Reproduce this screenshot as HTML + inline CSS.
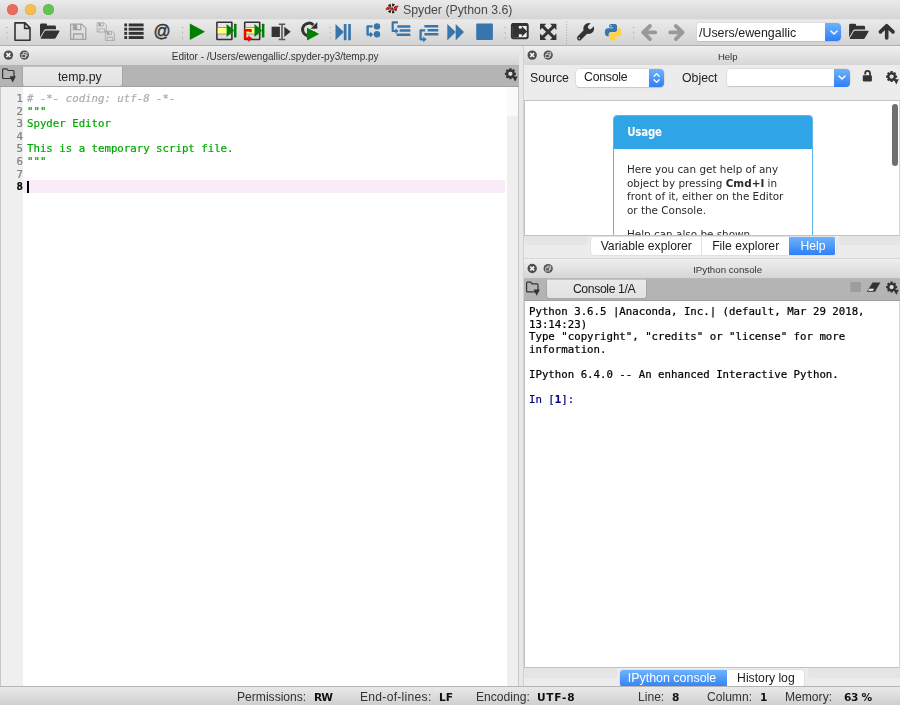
<!DOCTYPE html>
<html lang="en">
<head>
<meta charset="utf-8">
<title>Spyder (Python 3.6)</title>
<style>
*{box-sizing:border-box;margin:0;padding:0}
html,body{width:900px;height:705px;overflow:hidden;background:#ececec}
body{position:relative;font-family:"Liberation Sans",sans-serif;font-size:12.3px;color:#262626}
.abs{position:absolute}
.mono,.lbl,.tab,.btab,.sb,.docktitle,#title,#helpview{will-change:transform}
svg{position:absolute;overflow:visible}
#titlebar{left:0;top:0;width:900px;height:19.4px;background:linear-gradient(#eaeaea,#d5d5d5)}
#title{left:402.800px;top:0;height:19px;line-height:21.600px;font-size:12.3px;color:#484848;white-space:pre}
.tl{width:10.8px;height:10.8px;border-radius:50%;top:3.9px;box-shadow:inset 0 0 0 .6px rgba(0,0,0,.13)}
#toolbar{left:0;top:19.4px;width:900px;height:26.3px;background:linear-gradient(#eaeaea,#d3d3d3);border-top:1px solid #e4e4e4;border-bottom:1px solid #afafaf}
.docktitle{height:19.6px;background:linear-gradient(#efefef,#d6d6d6);border-bottom:1px solid #b9b9b9;font-size:10px;line-height:21.200px;text-align:center;color:#333;white-space:pre}
.tabbar{height:22px;background:#b4b4b4;border-bottom:1px solid #a0a0a0}
.tab{background:linear-gradient(#e9e9e9,#e2e2e2);border:1px solid #a6a6a6;border-top-color:#c2c2c2;border-radius:1px 1px 3px 3px;font-size:12.3px;line-height:19px;text-align:center;color:#222;white-space:pre}
.mono{font-family:"DejaVu Sans Mono","Liberation Mono",monospace;font-size:10.72px;line-height:12.59px;white-space:pre;-webkit-text-stroke:.22px currentColor}
.btabs{height:18.4px;border-radius:3.5px;background:#fff;box-shadow:0 0 0 .5px #d2d2d2,0 .5px 1px rgba(0,0,0,.18)}
.btab{height:18.4px;top:0;font-size:12.2px;line-height:18.2px;text-align:center;color:#1c1c1c;white-space:pre}
.btab.sel{background:linear-gradient(#6db3fb,#2f7ef6);color:#fff}
.sb{top:687.5px;height:18px;line-height:18px;font-size:12.1px;color:#333;white-space:pre}
.sb b{font-family:"DejaVu Sans","Liberation Sans",sans-serif;font-size:10.6px;color:#111}
.lbl{font-size:12.3px;line-height:14px;white-space:pre;color:#222}
.combo{background:#fff;border-radius:4px;box-shadow:0 0 0 .5px #d4d4d4,0 .6px .8px rgba(0,0,0,.2)}
.cbtn{background:linear-gradient(#6db3fb,#2f7ef6);border-radius:0 4px 4px 0}
</style>
</head>
<body>
<!-- title bar -->
<div id="titlebar" class="abs"></div>
<div id="title" class="abs">Spyder (Python 3.6)</div>
<svg style="left:386.100px;top:3.300px" width="12" height="11" viewBox="-6 -5.500 12 11"><circle r="5.200" fill="#f4f4f4"/><circle r="3.600" fill="none" stroke="#2a2a2a" stroke-width="2.900" stroke-dasharray="2.300 1"/><circle r="1.200" fill="#2a2a2a"/><path d="M-5.400.6q1.700-3 3.500-1t3.100 1.600q2.200-.4 4.300-3.400" fill="none" stroke="#e2281e" stroke-width="2" stroke-linecap="round"/></svg>
<div class="abs tl" style="left:7.300px;background:#ee6a5e"></div>
<div class="abs tl" style="left:25.300px;background:#f5bf4f"></div>
<div class="abs tl" style="left:43.300px;background:#61c554"></div>
<!-- toolbar -->
<div id="toolbar" class="abs"></div>
<svg id="tbicons" style="left:0;top:19px" width="900" height="27" viewBox="0 19 900 27">
<g fill="#9a9a9a">
<!-- toolbar handles -->
<g id="hd"><rect x="6.6" y="26.9" width="1" height="1"/><rect x="6.6" y="32.3" width="1" height="1"/><rect x="6.6" y="37.6" width="1" height="1"/></g>
<use href="#hd" x="175.4"/><use href="#hd" x="323"/><use href="#hd" x="498"/><use href="#hd" x="626.5"/>
</g>
<!-- vertical dotted separator -->
<line x1="566.6" y1="21.5" x2="566.6" y2="44" stroke="#a6a6a6" stroke-width="1" stroke-dasharray="1 1.7"/>
<!-- new file -->
<path d="M15 22.9h10l5 5v12.4h-15z M24.6 23.2v5.2h5.2" fill="none" stroke="#333" stroke-width="1.6" stroke-linejoin="round"/>
<!-- open folder -->
<g id="fopen" fill="#333"><path d="M40 37.2v-12.2q0-1.4 1.4-1.4h4.2q1.4 0 1.4 1.4v.6h7.6q1.4 0 1.4 1.4v2.2h-10q-1.3 0-2 1.2z"/><path d="M41.2 38.8q-1 0-.4-1l3.6-6.3q.6-1 1.8-1h12.6q1.2 0 .6 1l-3.6 6.3q-.6 1-1.8 1z"/></g>
<!-- save (disabled) -->
<g id="fsave"><path d="M70.6 24.1h11.2l4 4v11.3h-15.200z" fill="none" stroke="#a3a3a3" stroke-width="1.3" stroke-linejoin="round"/><path d="M73.4 24.1v5.6h7.4v-5.6M73.600 39.4v-5.4h9.2v5.4" fill="none" stroke="#a3a3a3" stroke-width="1.300"/><rect x="73.6" y="24.4" width="3.600" height="5" fill="#a3a3a3"/></g>
<!-- save all (disabled) -->
<g transform="translate(54.4 8.200) scale(.605)"><use href="#fsave"/></g>
<g transform="translate(62.6 16.700) scale(.605)"><use href="#fsave"/></g>
<!-- list -->
<g fill="#333"><rect x="124.3" y="23.5" width="2.800" height="2.900"/><rect x="128.7" y="23.5" width="14.900" height="2.900"/>
<rect x="124.3" y="27.700" width="2.800" height="2.900"/><rect x="128.7" y="27.700" width="14.900" height="2.900"/>
<rect x="124.3" y="31.900" width="2.800" height="2.900"/><rect x="128.7" y="31.900" width="14.900" height="2.900"/>
<rect x="124.3" y="36.100" width="2.800" height="2.900"/><rect x="128.7" y="36.100" width="14.900" height="2.900"/></g>
<!-- at -->
<text x="153.400" y="37.200" textLength="17.100" lengthAdjust="spacingAndGlyphs" font-family="Liberation Sans, sans-serif" font-size="17.900" fill="#333" stroke="#333" stroke-width=".45">@</text>
<!-- run -->
<path d="M189.800 23.400l15.300 8.300l-15.300 8.300z" fill="#008000"/>
<!-- run cell -->
<g id="cell"><rect x="216.900" y="22.200" width="15" height="17.300" rx=".4" fill="none" stroke="#333" stroke-width="1.600"/><rect x="217.700" y="27.700" width="13.400" height="6.200" fill="#ffff88"/><path d="M217.700 27.500h13.400M217.700 34.100h13.400" stroke="#8a7a50" stroke-width=".7"/></g>
<g id="garr" fill="#008000"><path d="M226.600 23.900l7.600 6.600l-7.600 6.600z"/><rect x="234" y="23.700" width="2.500" height="13.800" rx=".6"/></g>
<!-- run cell advance -->
<use href="#cell" x="27.800"/><use href="#garr" x="27.900"/>
<path d="M250.500 32.300v-2h-5.400v8.100h4" fill="none" stroke="#ff0000" stroke-width="2.400"/><path d="M248.300 35.200l4 3.400l-4 3.600z" fill="#ff0000"/>
<!-- run selection -->
<rect x="271.600" y="26.700" width="8.300" height="10.300" fill="#333"/><path d="M278.800 24.300h6.400M278.800 39.500h6.400M282 24.300v15.200" stroke="#585858" stroke-width="1.600" fill="none"/><path d="M284.300 26.700l6.400 5.100l-6.400 5.200z" fill="#333"/>
<!-- rerun -->
<path d="M313.400 25A6.350 6.350 0 1 0 314.800 31.800" fill="none" stroke="#333" stroke-width="3"/><path d="M317.300 21.900v6.800h-6.800z" fill="#333"/>
<path d="M307 27.800l12.200 6.300l-12.200 6.500z" fill="#008000"/>
<!-- debug -->
<g fill="#3776ab"><path d="M335.500 23.900l8.300 8.100l-8.300 8.200z"/><rect x="343.800" y="23.900" width="2.700" height="16.300" rx=".5"/><rect x="348.200" y="23.900" width="2.700" height="16.300" rx=".5"/>
<!-- step -->
<circle cx="377" cy="26.400" r="3.200"/><circle cx="377" cy="34.300" r="3.200"/><path d="M372.600 26.400h-5v8.200h3.600" fill="none" stroke="#3776ab" stroke-width="2.400" stroke-linejoin="round"/><path d="M370 31.800l3.400 2.800l-3.400 2.800z"/>
<!-- step into -->
<path d="M398 22.400h-5.300v8.600h3.200" fill="none" stroke="#3776ab" stroke-width="2.200" stroke-linejoin="round"/><path d="M395.400 28.200l3.300 2.800l-3.300 2.800z"/>
<rect x="397.300" y="25.200" width="13.100" height="2.500" rx=".5"/><rect x="399.600" y="29.300" width="10.800" height="2.500" rx=".5"/><rect x="396.600" y="33.500" width="13.800" height="2.500" rx=".5"/>
<!-- step return -->
<rect x="424.400" y="25" width="13.900" height="2.500" rx=".5"/><rect x="427.600" y="29.100" width="10.700" height="2.500" rx=".5"/><rect x="424.400" y="33.100" width="13.900" height="2.500" rx=".5"/>
<path d="M425.200 30.300h-4.600v9h3.200" fill="none" stroke="#3776ab" stroke-width="2.300" stroke-linejoin="round"/><path d="M423.200 36.400l3.500 2.900l-3.500 2.900z"/>
<!-- continue -->
<path d="M447.300 23.900l8.400 8.200l-8.400 8.400z"/><path d="M455.700 23.900l8.300 8.200l-8.300 8.400z"/>
<!-- stop -->
<rect x="476.200" y="23.500" width="16.700" height="16.400" rx="1"/></g>
<!-- maximize pane -->
<rect x="511.900" y="23.900" width="15.800" height="14.300" rx="1.600" fill="#f4f4f4" stroke="#333" stroke-width="2"/><rect x="511.900" y="23.400" width="15.800" height="2.600" fill="#333"/>
<path d="M513 25.800h5.800v2.800h3v-2.600l5.400 5.400l-5.400 5.400v-2.600h-3v3h-5.800z" fill="#333"/>
<!-- fullscreen -->
<g fill="#333" stroke="none"><path d="M540 23.700h6.400l-6.400 6.400zM556.400 23.700v6.400l-6.400-6.400zM540 39.900v-6.400l6.400 6.400zM556.400 39.900h-6.400l6.400-6.400z"/><path d="M542.200 25.900l12 11.800M554.200 25.900l-12 11.800" stroke="#333" stroke-width="3"/></g>
<!-- wrench -->
<mask id="wm" maskUnits="userSpaceOnUse" x="570" y="15" width="40" height="35"><rect x="570" y="15" width="40" height="35" fill="#fff"/><path d="M590 27.100L597 20.100" stroke="#000" stroke-width="4.300" stroke-linecap="round"/></mask>
<circle cx="588.700" cy="28.500" r="5.400" fill="#333" mask="url(#wm)"/><path d="M579.400 38l6.800-6.800" stroke="#333" stroke-width="4.900" stroke-linecap="round"/><circle cx="579.300" cy="38.200" r=".8" fill="#e4e4e4"/>
<!-- python -->
<g transform="translate(604.900 23.900) scale(.1475)"><path fill="#3776ab" d="M54.919 0C50.335.022 45.958.413 42.106 1.095 30.760 3.099 28.700 7.295 28.700 15.032V25.251H55.513V28.657H28.700 18.638C10.845 28.657 4.022 33.341 1.888 42.251-.574 52.464-.683 58.837 1.888 69.501 3.793 77.439 8.345 83.095 16.138 83.095H25.356V70.845C25.356 61.995 33.013 54.188 42.106 54.188H68.888C76.342 54.188 82.294 48.050 82.294 40.563V15.032C82.294 7.766 76.164 2.307 68.888 1.095 64.282.328 59.502-.02 54.919 0ZM40.419 8.220C43.188 8.220 45.450 10.518 45.450 13.345 45.450 16.161 43.188 18.438 40.419 18.438 37.639 18.438 35.388 16.161 35.388 13.345 35.388 10.518 37.639 8.220 40.419 8.220Z"/><path fill="#ffd43b" d="M85.638 28.657V40.563C85.638 49.794 77.812 57.563 68.888 57.563H42.106C34.770 57.563 28.700 63.842 28.700 71.188V96.720C28.700 103.986 35.019 108.260 42.106 110.345 50.594 112.840 58.733 113.291 68.888 110.345 75.638 108.390 82.294 104.457 82.294 96.720V86.501H55.513V83.095H82.294 95.700C103.492 83.095 106.396 77.659 109.106 69.501 111.906 61.102 111.786 53.026 109.106 42.251 107.181 34.493 103.502 28.657 95.700 28.657ZM70.575 93.313C73.354 93.313 75.606 95.591 75.606 98.407 75.606 101.234 73.354 103.532 70.575 103.532 67.806 103.532 65.544 101.234 65.544 98.407 65.544 95.591 67.806 93.313 70.575 93.313Z"/></g>
<!-- back / forward (disabled) -->
<g fill="none" stroke="#999" stroke-width="3.800" stroke-linecap="round" stroke-linejoin="round"><path d="M655.200 32.400h-11.500M650 26l-6.800 6.400l6.800 6.700"/><path d="M670.200 32.400h11.500M675.800 26l6.800 6.400l-6.800 6.700"/></g>
<!-- working dir open + up -->
<use href="#fopen" x="809.100" y=".2"/>
<g fill="none" stroke="#333" stroke-width="3.600" stroke-linecap="round" stroke-linejoin="round"><path d="M886.700 38v-11M880.400 31.900l6.300-6.200l6.300 6.200"/></g>
</svg>
<!-- working directory combo -->
<div class="abs combo" style="left:696.800px;top:23.200px;width:144px;height:17.400px;border-radius:1.500px 4px 4px 1.500px"></div>
<div class="abs lbl" style="left:699.200px;top:25.600px;font-size:12.4px">/Users/ewengallic</div>
<div class="abs cbtn" style="left:825px;top:23px;width:15.800px;height:17.700px"></div>
<svg style="left:829.500px;top:29.500px" width="8" height="5" viewBox="0 0 8 5"><path d="M.9.900l3.100 3l3.100-3" fill="none" stroke="#fff" stroke-width="1.400" stroke-linecap="round" stroke-linejoin="round"/></svg>

<!-- editor dock -->
<div class="abs docktitle" style="left:0;top:45.700px;width:519.400px;padding-left:31px">Editor - /Users/ewengallic/.spyder-py3/temp.py</div>
<div class="abs tabbar" style="left:0;top:65.300px;width:519.400px"></div>
<div class="abs tab" style="left:22px;top:65.600px;width:100.600px;height:20.600px;padding-left:15px;padding-top:1px">temp.py</div>
<div class="abs" style="left:0;top:87.300px;width:519.400px;height:599px;background:#fff;border-left:1px solid #c6c6c6;border-right:1px solid #c8c8c8"></div>
<div class="abs" style="left:1px;top:87.300px;width:22.200px;height:599px;background:#efefef"></div>
<div class="abs" style="left:23.200px;top:180.200px;width:482px;height:13px;background:#f7ecf8"></div>
<div class="abs" style="left:507px;top:87.300px;width:11.400px;height:599px;background:#efefef"></div>
<div class="abs" style="left:507px;top:87.300px;width:11.400px;height:28.400px;background:#fafafa"></div>
<div class="abs mono" id="lnums" style="left:0;top:92.500px;width:23px;text-align:right;color:#808080">1
2
3
4
5
6
7
<b style="color:#000">8</b></div>
<div class="abs mono" id="code" style="left:27.200px;top:92.500px;color:#00aa00"><i style="color:#adadad"># -*- coding: utf-8 -*-</i>
"""
Spyder Editor

This is a temporary script file.
"""
</div>
<div class="abs" style="left:27.300px;top:180.600px;width:1.400px;height:12.400px;background:#000"></div>

<!-- splitter -->
<div class="abs" style="left:519.400px;top:45.700px;width:4.300px;height:641px;background:#e8e8e8"></div>

<div class="abs" style="left:523.300px;top:45.700px;width:1px;height:641px;background:#d2d2d2"></div>
<!-- help dock -->
<div class="abs docktitle" style="left:523.700px;top:45.700px;width:376.300px;padding-left:31px;font-size:9.500px">Help</div>
<div class="abs" style="left:523.700px;top:65.300px;width:376.300px;height:35px;background:#ececec"></div>
<div class="abs lbl" style="left:530.400px;top:70.500px">Source</div>
<div class="abs combo" style="left:575.700px;top:68.700px;width:88px;height:18px"></div>
<div class="abs lbl" style="left:583.500px;top:70.100px;letter-spacing:-.25px">Console</div>
<div class="abs cbtn" style="left:649px;top:68.500px;width:14.800px;height:18.300px"></div>
<svg style="left:652.900px;top:71.800px" width="8" height="12" viewBox="0 0 8 12"><path d="M1 4.200l2.600-2.600l2.600 2.600M1 7.800l2.600 2.600l2.600-2.600" fill="none" stroke="#fff" stroke-width="1.300" stroke-linecap="round" stroke-linejoin="round"/></svg>
<div class="abs lbl" style="left:682.200px;top:70.500px">Object</div>
<div class="abs combo" style="left:726.700px;top:68.700px;width:123px;height:17.800px;border-radius:2px 4px 4px 2px"></div>
<div class="abs cbtn" style="left:834px;top:68.500px;width:15.700px;height:18.200px"></div>
<svg style="left:837.700px;top:75.100px" width="8" height="5" viewBox="0 0 8 5"><path d="M.9.900l3.100 3l3.100-3" fill="none" stroke="#fff" stroke-width="1.400" stroke-linecap="round" stroke-linejoin="round"/></svg>
<div class="abs" id="helpview" style="left:523.700px;top:99.600px;width:376.300px;height:136.400px;background:#fff;border:1px solid #c2c2c2;border-right:1px solid #d4d4d4;overflow:hidden">
  <div class="abs" style="left:87.600px;top:13.900px;width:200.400px;height:160px;border:1px solid #5db5ec;border-radius:3.500px;background:#fff;overflow:hidden">
    <div style="height:34.600px;margin:-1px -1px 0 -1px;background:#2fa4e7;color:#fff;font-family:'DejaVu Sans Condensed','DejaVu Sans','Liberation Sans',sans-serif;font-weight:bold;font-size:11.400px;letter-spacing:-.2px;line-height:35.800px;padding-left:14.600px">Usage</div>
    <div id="helptext" style="font-family:'DejaVu Sans','Liberation Sans',sans-serif;font-size:10.420px;line-height:13.400px;padding:14px 0 0 13.400px;color:#2a2a2a;white-space:pre">Here you can get help of any
object by pressing <b>Cmd+I</b> in
front of it, either on the Editor
or the Console.
<div style="margin-top:11.300px">Help can also be shown</div></div>
  </div>
  <div class="abs" style="left:367px;top:2.500px;width:6.400px;height:62.500px;border-radius:3.300px;background:#707070"></div>
</div>
<div class="abs" style="left:524px;top:236px;width:63.600px;height:9.400px;background:#e5e5e5;border-radius:0 0 3px 3px"></div><div class="abs" style="left:838.600px;top:236px;width:61.400px;height:9.400px;background:#e5e5e5;border-radius:0 0 0 3px"></div>
<div class="abs btabs" style="left:590.500px;top:237px;width:245px;height:18px;box-shadow:0 0 0 .5px #d6d6d6"></div>
<div class="abs" style="left:590.500px;top:237px;width:245px;height:18px;border-radius:3.500px;overflow:hidden">
  <div class="abs btab" style="left:0;width:110.500px">Variable explorer</div>
  <div class="abs btab" style="left:110.500px;width:88.400px;border-left:1px solid #e2e2e2">File explorer</div>
  <div class="abs btab sel" style="left:198.900px;width:46.100px;padding-left:2px">Help</div>
</div>

<!-- ipython console dock -->
<div class="abs docktitle" style="left:523.700px;top:257.600px;width:376.300px;border-top:1px solid #d6d6d6;height:21px;line-height:21px;font-size:9.700px;padding-left:31px">IPython console</div>
<div class="abs tabbar" style="left:523.700px;top:278.600px;width:376.300px"></div>
<div class="abs tab" style="left:546px;top:278.900px;width:100.800px;height:20px;padding-left:15.400px;letter-spacing:-.42px">Console 1/A</div>
<div class="abs" style="left:523.700px;top:300.600px;width:376.300px;height:367.400px;background:#fff;border-left:1px solid #c2c2c2;border-bottom:1px solid #c2c2c2;border-right:1px solid #d4d4d4"></div>
<div class="abs mono" id="console" style="left:528.600px;top:305.900px;color:#000;line-height:12.600px">Python 3.6.5 |Anaconda, Inc.| (default, Mar 29 2018,
13:14:23)
Type "copyright", "credits" or "license" for more
information.

IPython 6.4.0 -- An enhanced Interactive Python.

<span style="color:#000080">In [<b>1</b>]:</span></div>
<div class="abs" style="left:524px;top:668px;width:92.800px;height:9.600px;background:#e5e5e5;border-radius:0 0 3px 3px"></div><div class="abs" style="left:807.600px;top:668px;width:92.400px;height:9.600px;background:#e5e5e5;border-radius:0 0 0 3px"></div>
<div class="abs btabs" style="left:619.700px;top:669.800px;width:184.800px;height:17.700px;box-shadow:0 0 0 .5px #d6d6d6"></div>
<div class="abs" style="left:619.700px;top:669.800px;width:184.800px;height:17.700px;border-radius:3.500px;overflow:hidden">
  <div class="abs btab sel" style="left:0;width:107px;line-height:17.600px;font-size:12.450px;padding-right:3px">IPython console</div>
  <div class="abs btab" style="left:107px;width:77.800px;line-height:17.600px">History log</div>
</div>

<!-- status bar -->
<div class="abs" style="left:0;top:686.300px;width:900px;height:18.700px;background:linear-gradient(#e9e9e9,#cfcfcf);border-top:1px solid #b4b4b4"></div>
<div class="abs sb" style="left:237px">Permissions:</div><div class="abs sb" style="left:314.300px"><b style="letter-spacing:-.9px">RW</b></div>
<div class="abs sb" style="left:360.200px;letter-spacing:.28px">End-of-lines:</div><div class="abs sb" style="left:438.600px"><b>LF</b></div>
<div class="abs sb" style="left:476px">Encoding:</div><div class="abs sb" style="left:537.400px"><b style="letter-spacing:.75px">UTF-8</b></div>
<div class="abs sb" style="left:638.200px">Line:</div><div class="abs sb" style="left:672.400px"><b>8</b></div>
<div class="abs sb" style="left:707px">Column:</div><div class="abs sb" style="left:759.800px"><b>1</b></div>
<div class="abs sb" style="left:784.800px">Memory:</div><div class="abs sb" style="left:844.400px"><b style="letter-spacing:-.3px">63 %</b></div>

<!-- small dock / tabbar icons -->
<svg id="smicons" style="left:0;top:0" width="900" height="705" viewBox="0 0 900 705">
<defs>
<g id="dclose"><circle r="4.700" fill="#4e4e4e"/><path d="M-1.900-1.900l3.800 3.800M1.900-1.900l-3.800 3.800" stroke="#f4f4f4" stroke-width="1.700"/></g>
<g id="dfloat"><circle r="4.600" fill="#4e4e4e"/><rect x="-1.100" y="-2.400" width="3.600" height="3.200" fill="none" stroke="#d8d8d8" stroke-width=".9"/><rect x="-2.500" y="-.7" width="3.600" height="3.200" fill="#4e4e4e" stroke="#d0d0d0" stroke-width=".9"/></g>
<g id="bfold"><path d="M.6 1.500q0-.9.900-.9h2.800q.7 0 1.100.6l.7 1h5q.9 0 .9.900v6.200q0 .9-.9.900h-9.600q-.9 0-.9-.9z" fill="none" stroke="#333" stroke-width="1.200"/><path d="M7.600 8h6.200l-3.100 6.100z" fill="#333"/></g>
<g id="gear"><circle r="3.300" fill="#dedede" stroke="#333" stroke-width="2.300"/><g stroke="#333" stroke-width="2.200"><path d="M0-5.500v2.200M0 5.500v-2.200M-5.500 0h2.200M5.500 0h-2.200M-3.900-3.900l1.500 1.500M3.900 3.900l-1.500-1.500M3.900-3.900l-1.500 1.500M-3.900 3.900l1.500-1.500"/></g><path d="M2.200 2.600h5l-2.500 5.400z" fill="#333"/></g>
</defs>
<use href="#dclose" x="8.400" y="55.100"/><use href="#dfloat" x="24.400" y="55.100"/>
<use href="#dclose" x="532.200" y="55.100"/><use href="#dfloat" x="548.200" y="55.100"/>
<use href="#dclose" x="532.200" y="268.500"/><use href="#dfloat" x="548.200" y="268.500"/>
<use href="#bfold" x="2" y="68.300"/>
<use href="#bfold" x="526" y="281.600"/>
<use href="#gear" x="510.400" y="73.800"/>
<use href="#gear" x="891.600" y="76.600"/>
<use href="#gear" x="891.600" y="287.100"/>
<!-- lock open -->
<rect x="862.800" y="75.300" width="9.100" height="6.100" rx=".8" fill="#333"/><path d="M870 75.500v-2.300a2.400 2.400 0 0 0-4.800 0v1.200" fill="none" stroke="#333" stroke-width="1.800"/>
<!-- console: disabled stop + eraser -->
<rect x="850.300" y="282" width="10.700" height="10" fill="#9d9d9d"/>
<path d="M872.600 282.600h7.700l-5.300 9.100h-8.200z" fill="#333"/><path d="M869.200 288.700h4.900l-1.200 2h-4.900z" fill="#f2f2f2"/>
</svg>
</body>
</html>
